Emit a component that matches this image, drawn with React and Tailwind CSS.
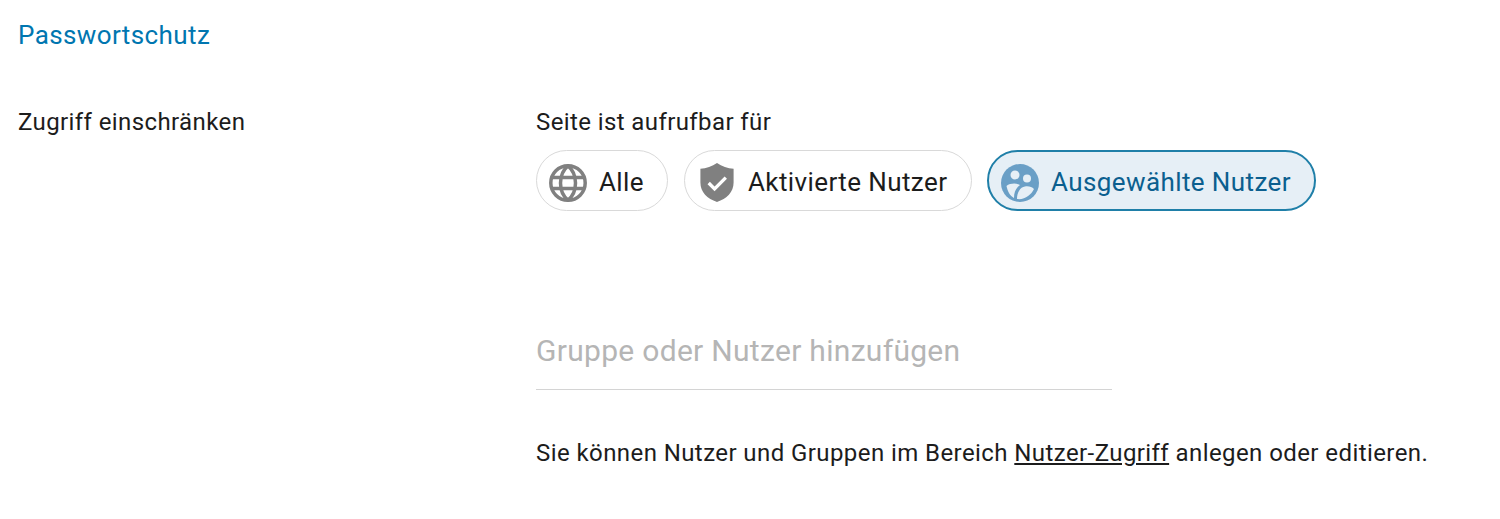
import React from "react";
function Globe(){return(<svg width="38" height="38" viewBox="0 0 38 38" fill="none" stroke="#808080" strokeWidth="3.5"><circle cx="19" cy="19" r="17.2"/><path d="M19 1.800C9 10 9 28 19 36.200M19 1.800C29 10 29 28 19 36.200"/><path d="M3 13.500h32M3 24.500h32"/></svg>)}
function Shield(){return(<svg width="36" height="41" viewBox="0 0 36 42"><path d="M18 1 C13 4.500 7 6.500 1 7 V21 C1 31 8 37.500 18 41 C28 37.500 35 31 35 21 V7 C29 6.500 23 4.500 18 1z" fill="#808080"/><path d="M9.500 21.500l6 6 11.500-11.500" fill="none" stroke="#fff" strokeWidth="3.400"/></svg>)}
function Users(){return(<svg width="38" height="38" viewBox="0 0 38 38"><circle cx="19" cy="19" r="19" fill="#6a9fc6"/><circle cx="14" cy="11" r="4.500" fill="#e6eff6"/><circle cx="26" cy="14.500" r="4" fill="#e6eff6"/><path d="M5.500 22C9 19 16 19 19 21C15 24 13 28 13 34C9 32 6.500 27 5.500 22z" fill="#e6eff6"/><path d="M16 35C16 29 19 23 24 22.500C28 22 31 23 33 25C30 31 24 36 16 35z" fill="#e6eff6"/></svg>)}
export default function App(){return(
<div className="w-[1500px] h-[519px] bg-white text-[#1c1c1c] font-['Roboto',sans-serif] overflow-hidden">
 <div className="pl-[18px] pt-[20px] text-[26px] tracking-[0.4px] leading-[30px] text-[#0076b0]">Passwortschutz</div>
 <div className="flex pl-[18px] pt-[57px]">
  <div className="w-[518px] text-[24px] tracking-[0.4px] leading-[30px]">Zugriff einschränken</div>
  <div className="flex flex-col">
   <div className="text-[24px] tracking-[0.4px] leading-[30px]">Seite ist aufrufbar für</div>
   <div className="flex gap-[15px] mt-[13px] text-[26px] tracking-[0.4px]">
    <div className="flex items-center gap-[12px] w-[132px] mr-[1px] h-[61px] pl-[12px] pt-[4px] rounded-full border border-[#d9d9d9]"><Globe/>Alle</div>
    <div className="flex items-center gap-[13px] w-[288px] h-[61px] pl-[14px] pt-[4px] rounded-full border border-[#d9d9d9]"><Shield/>Aktivierte Nutzer</div>
    <div className="flex items-center gap-[12px] w-[329px] h-[61px] pl-[12px] pt-[4px] rounded-full border-2 border-[#1f7fa8] bg-[#e6eff6] text-[#0b5f8f]"><Users/>Ausgewählte Nutzer</div>
   </div>
   <div className="mt-[120px] w-[576px] h-[59px] border-b border-[#d4d4d4] text-[30px] tracking-[0.3px] leading-[40px] text-[#b5b5b5]">Gruppe oder Nutzer hinzufügen</div>
   <div className="mt-[48px] text-[24px] tracking-[0.42px] leading-[30px] whitespace-nowrap">Sie können Nutzer und Gruppen im Bereich <span className="underline">Nutzer-Zugriff</span> anlegen oder editieren.</div>
  </div>
 </div>
</div>)}
